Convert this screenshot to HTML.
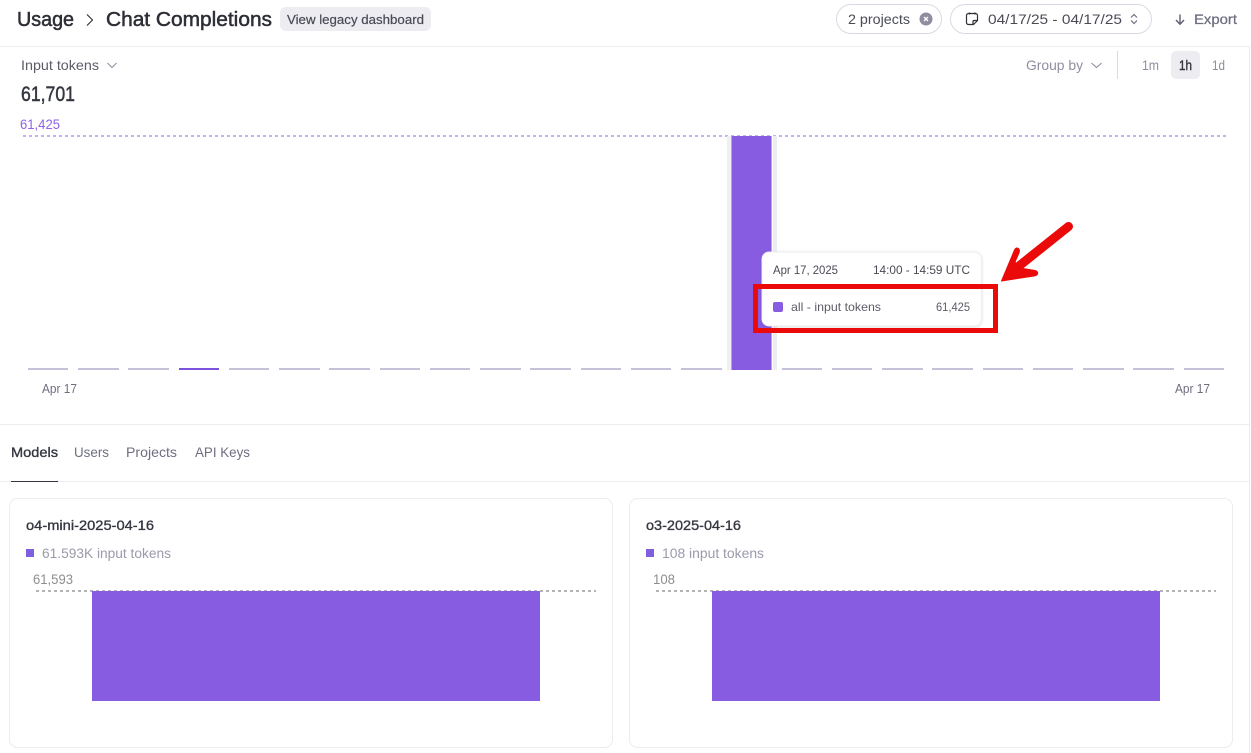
<!DOCTYPE html>
<html>
<head>
<meta charset="utf-8">
<style>
html,body{margin:0;padding:0;background:#fff;width:1251px;height:753px;overflow:hidden}
svg{display:block}
text{font-family:"Liberation Sans",sans-serif;white-space:pre}
</style>
</head>
<body>
<svg width="1251" height="753" viewBox="0 0 1251 753" xmlns="http://www.w3.org/2000/svg">
<defs>
<filter id="sh" x="-10%" y="-20%" width="120%" height="150%"><feDropShadow dx="0" dy="1" stdDeviation="1.500" flood-color="#000" flood-opacity="0.12"/></filter>
</defs>
<rect width="1251" height="753" fill="#fff"/>
<!-- frame lines -->
<rect x="0" y="46" width="1250" height="1" fill="#ececf1"/>
<rect x="1249" y="46" width="1" height="707" fill="#ececf1"/>
<rect x="0" y="424" width="1249" height="1" fill="#ececf1"/>
<rect x="0" y="481" width="1249" height="1" fill="#ececf1"/>
<!-- header -->
<text x="17" y="26" font-size="20" fill="#2d2e36" stroke="#2d2e36" stroke-width="0.5" textLength="57" lengthAdjust="spacingAndGlyphs">Usage</text>
<path d="M87 14.500L92.500 20L87 25.500" fill="none" stroke="#2d2e36" stroke-width="1.100"/>
<text x="106" y="26" font-size="20" fill="#2d2e36" stroke="#2d2e36" stroke-width="0.5" textLength="166" lengthAdjust="spacingAndGlyphs">Chat Completions</text>
<rect x="280" y="7" width="151" height="24" rx="6" fill="#ececf1"/>
<text x="287" y="24" font-size="13" fill="#4a4b55" stroke="#4a4b55" stroke-width="0.2" textLength="137" lengthAdjust="spacingAndGlyphs">View legacy dashboard</text>
<!-- filters -->
<rect x="836.500" y="4.500" width="105" height="29" rx="14.500" fill="#fff" stroke="#d9d9e3"/>
<text x="848" y="24" font-size="13.500" fill="#4a4b55" textLength="62" lengthAdjust="spacingAndGlyphs">2 projects</text>
<circle cx="926" cy="19" r="6.500" fill="#8e8ea0"/>
<path d="M924 17L928 21M928 17L924 21" stroke="#fff" stroke-width="1.300"/>
<rect x="950.500" y="4.500" width="201" height="29" rx="14.500" fill="#fff" stroke="#d9d9e3"/>
<path d="M968.500 13.500h7a2 2 0 0 1 2 2v5l-4 4h-5a2 2 0 0 1-2-2v-7a2 2 0 0 1 2-2zM977 20.500h-3a1 1 0 0 0-1 1v3M969.500 12.500v2M975 12.500v2" fill="none" stroke="#2d2e36" stroke-width="1.200" stroke-linejoin="round"/>
<text x="988" y="24" font-size="14" fill="#4a4b55" textLength="134" lengthAdjust="spacingAndGlyphs">04/17/25 - 04/17/25</text>
<path d="M1131 17.500L1134 14.500L1137 17.500M1131 20.500L1134 23.500L1137 20.500" fill="none" stroke="#6e6e80" stroke-width="1.200"/>
<path d="M1180 14.500V24M1176 20L1180 24.200L1184 20" fill="none" stroke="#5f5f70" stroke-width="1.400"/>
<text x="1194" y="24" font-size="14" fill="#6e6e80" stroke="#6e6e80" stroke-width="0.25" textLength="43" lengthAdjust="spacingAndGlyphs">Export</text>
<!-- metric -->
<text x="21" y="70" font-size="14" fill="#5c5c69" textLength="78" lengthAdjust="spacingAndGlyphs">Input tokens</text>
<path d="M107.500 63L112 67.500L116.500 63" fill="none" stroke="#8e8ea0" stroke-width="1"/>
<text x="21" y="101" font-size="21" fill="#353740" stroke="#353740" stroke-width="0.5" textLength="54" lengthAdjust="spacingAndGlyphs">61,701</text>
<text x="20" y="129" font-size="13.500" fill="#8f62e6" textLength="40" lengthAdjust="spacingAndGlyphs">61,425</text>
<text x="1026" y="70" font-size="14" fill="#8e8ea0" textLength="57" lengthAdjust="spacingAndGlyphs">Group by</text>
<path d="M1091.500 63L1096.500 67.500L1101.500 63" fill="none" stroke="#8e8ea0" stroke-width="1.100"/>
<rect x="1117" y="51" width="1" height="28" fill="#d9d9e3"/>
<text x="1142" y="70" font-size="14" fill="#8e8ea0" textLength="17" lengthAdjust="spacingAndGlyphs">1m</text>
<rect x="1171" y="51" width="29" height="28" rx="5" fill="#ececf1"/>
<text x="1179" y="70" font-size="14" fill="#353740" stroke="#353740" stroke-width="0.4" textLength="13" lengthAdjust="spacingAndGlyphs">1h</text>
<text x="1212" y="70" font-size="14" fill="#8e8ea0" textLength="13" lengthAdjust="spacingAndGlyphs">1d</text>
<!-- chart -->
<line x1="23" y1="136" x2="1227" y2="136" stroke="#c8aff0" stroke-width="2" stroke-dasharray="3 3" shape-rendering="crispEdges"/>
<rect x="727" y="136" width="4" height="234" fill="#f0f0f3"/>
<rect x="773" y="136" width="4" height="234" fill="#ececf1"/>
<g fill="#c5c1d9">
<rect x="28" y="368" width="40" height="2"/><rect x="78" y="368" width="41" height="2"/><rect x="128" y="368" width="41" height="2"/>
<rect x="179" y="368" width="40" height="2" fill="#7d52dc"/>
<rect x="229" y="368" width="40" height="2"/><rect x="279" y="368" width="41" height="2"/><rect x="329" y="368" width="41" height="2"/><rect x="380" y="368" width="40" height="2"/><rect x="430" y="368" width="40" height="2"/><rect x="480" y="368" width="41" height="2"/><rect x="530" y="368" width="41" height="2"/><rect x="581" y="368" width="40" height="2"/><rect x="631" y="368" width="40" height="2"/><rect x="681" y="368" width="41" height="2"/>
<rect x="782" y="368" width="40" height="2"/><rect x="832" y="368" width="40" height="2"/><rect x="882" y="368" width="41" height="2"/><rect x="932" y="368" width="41" height="2"/><rect x="983" y="368" width="40" height="2"/><rect x="1033" y="368" width="40" height="2"/><rect x="1083" y="368" width="41" height="2"/><rect x="1133" y="368" width="41" height="2"/><rect x="1184" y="368" width="40" height="2"/>
</g>
<rect x="731" y="136" width="41" height="234" fill="#875ce1"/>
<rect x="731" y="136" width="1" height="234" fill="#b9a0ee"/>
<rect x="771" y="136" width="1" height="234" fill="#b9a0ee"/>
<text x="42" y="393" font-size="13" fill="#6e6e80" textLength="35" lengthAdjust="spacingAndGlyphs">Apr 17</text>
<text x="1175" y="393" font-size="13" fill="#6e6e80" textLength="35" lengthAdjust="spacingAndGlyphs">Apr 17</text>
<!-- tooltip -->
<rect x="762" y="252" width="219.500" height="74" rx="7" fill="#fff" stroke="#ececf1" filter="url(#sh)"/>
<text x="773" y="274" font-size="12" fill="#4a4b55" textLength="65" lengthAdjust="spacingAndGlyphs">Apr 17, 2025</text>
<text x="873" y="274" font-size="12" fill="#4a4b55" textLength="97" lengthAdjust="spacingAndGlyphs">14:00 - 14:59 UTC</text>
<rect x="773" y="302" width="10" height="10" rx="2" fill="#875ce1"/>
<text x="791" y="311" font-size="12" fill="#5c5c69" textLength="90" lengthAdjust="spacingAndGlyphs">all - input tokens</text>
<text x="936" y="311" font-size="12" fill="#5c5c69" textLength="34" lengthAdjust="spacingAndGlyphs">61,425</text>
<!-- annotation -->
<rect x="755.500" y="286.500" width="240" height="44" fill="none" stroke="#ea0a0a" stroke-width="5"/>
<path d="M1068.500 226.500L1019 266" fill="none" stroke="#ea0a0a" stroke-width="9" stroke-linecap="round"/>
<path d="M1001.500 281L1014.500 250Q1016 247 1018.500 248.500Q1020 250 1019 253L1015 262L1020 268L1035 270.500Q1038.500 271.500 1037.500 274Q1037 275.500 1034 276Z" fill="#ea0a0a" stroke="#ea0a0a" stroke-linejoin="round"/>
<!-- tabs -->
<text x="11" y="457" font-size="14" fill="#353740" stroke="#353740" stroke-width="0.35" textLength="47" lengthAdjust="spacingAndGlyphs">Models</text>
<text x="74" y="457" font-size="14" fill="#6e6e80" textLength="35" lengthAdjust="spacingAndGlyphs">Users</text>
<text x="126" y="457" font-size="14" fill="#6e6e80" textLength="51" lengthAdjust="spacingAndGlyphs">Projects</text>
<text x="195" y="457" font-size="14" fill="#6e6e80" textLength="55" lengthAdjust="spacingAndGlyphs">API Keys</text>
<rect x="11" y="481" width="47" height="1" fill="#353740"/>
<!-- card 1 -->
<rect x="9.500" y="498.500" width="603" height="249" rx="8" fill="#fff" stroke="#ececf1"/>
<text x="26" y="530" font-size="14" fill="#353740" stroke="#353740" stroke-width="0.35" textLength="128" lengthAdjust="spacingAndGlyphs">o4-mini-2025-04-16</text>
<rect x="26" y="549" width="8" height="8" fill="#7f5fe0"/>
<text x="42" y="558" font-size="13.500" fill="#9a9aac" textLength="129" lengthAdjust="spacingAndGlyphs">61.593K input tokens</text>
<text x="33" y="584" font-size="13.500" fill="#8e8e8e" textLength="40" lengthAdjust="spacingAndGlyphs">61,593</text>
<line x1="36" y1="591" x2="596" y2="591" stroke="#b4b4b4" stroke-width="2" stroke-dasharray="3 3" shape-rendering="crispEdges"/>
<rect x="92" y="591" width="448" height="110" fill="#875ce1"/>
<!-- card 2 -->
<rect x="629.500" y="498.500" width="603" height="249" rx="8" fill="#fff" stroke="#ececf1"/>
<text x="646" y="530" font-size="14" fill="#353740" stroke="#353740" stroke-width="0.35" textLength="95" lengthAdjust="spacingAndGlyphs">o3-2025-04-16</text>
<rect x="646" y="549" width="8" height="8" fill="#7f5fe0"/>
<text x="662" y="558" font-size="13.500" fill="#9a9aac" textLength="102" lengthAdjust="spacingAndGlyphs">108 input tokens</text>
<text x="653" y="584" font-size="13.500" fill="#8e8e8e" textLength="22" lengthAdjust="spacingAndGlyphs">108</text>
<line x1="656" y1="591" x2="1216" y2="591" stroke="#b4b4b4" stroke-width="2" stroke-dasharray="3 3" shape-rendering="crispEdges"/>
<rect x="712" y="591" width="448" height="110" fill="#875ce1"/>
</svg>
</body>
</html>
